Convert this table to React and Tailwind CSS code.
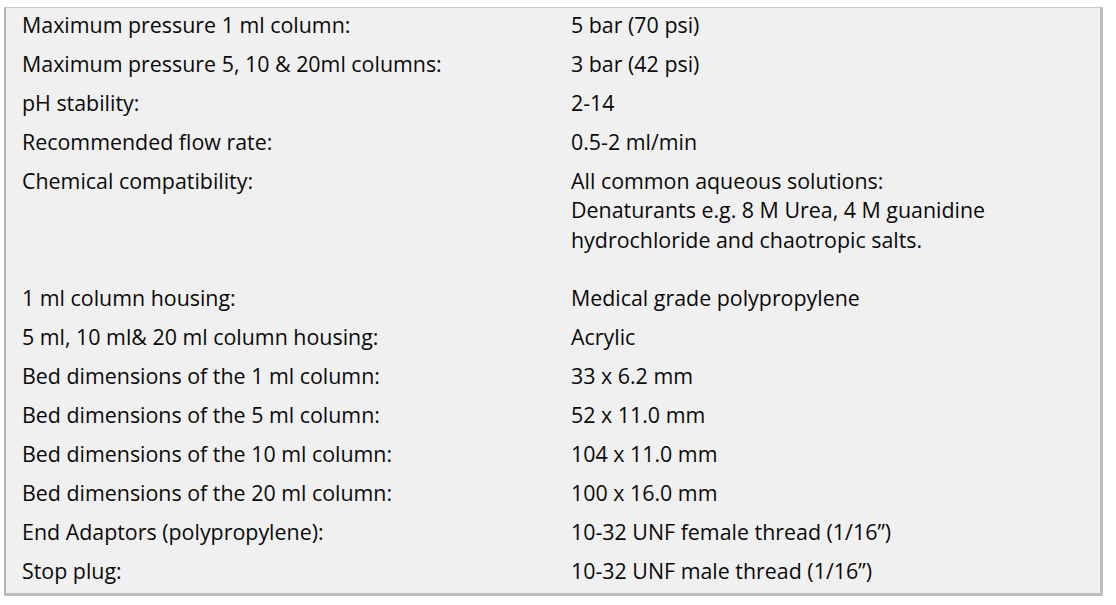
import React from "react";

const rows = [
  ["Maximum pressure 1 ml column:", ["5 bar (70 psi)"]],
  ["Maximum pressure 5, 10 & 20ml columns:", ["3 bar (42 psi)"]],
  ["pH stability:", ["2-14"]],
  ["Recommended flow rate:", ["0.5-2 ml/min"]],
  [
    "Chemical compatibility:",
    [
      "All common aqueous solutions:",
      "Denaturants e.g. 8 M Urea, 4 M guanidine",
      "hydrochloride and chaotropic salts.",
    ],
    true,
  ],
  ["1 ml column housing:", ["Medical grade polypropylene"]],
  ["5 ml, 10 ml& 20 ml column housing:", ["Acrylic"]],
  ["Bed dimensions of the 1 ml column:", ["33 x 6.2 mm"]],
  ["Bed dimensions of the 5 ml column:", ["52 x 11.0 mm"]],
  ["Bed dimensions of the 10 ml column:", ["104 x 11.0 mm"]],
  ["Bed dimensions of the 20 ml column:", ["100 x 16.0 mm"]],
  ["End Adaptors (polypropylene):", ["10-32 UNF female thread (1/16\u201d)"]],
  ["Stop plug:", ["10-32 UNF male thread (1/16\u201d)"]],
];

const App = () => {
  return (
    <div className="w-[1116px] h-[605px] bg-white pt-[7px] pl-[4px]">
      <div
        className="w-[1099px] h-[589px] bg-[#f0f0f0] border-t border-t-[#c8c8c8] border-l-2 border-l-[#b4b4b4] border-r-[3px] border-r-[#bdbdbd] border-b-[3px] border-b-[#bdbdbd] pl-[16px] text-[#0a0a0a] text-[21.4px]"
        style={{ fontFamily: '"Open Sans", "Liberation Sans", sans-serif' }}
      >
        <div className="-mt-[3px]">
          {rows.map(([label, value, gap]) => (
            <div
              key={label}
              className={`flex py-[4.75px] leading-[29.5px] ${gap ? "mb-[19px]" : ""}`}
            >
              <div className="w-[549px] shrink-0">{label}</div>
              <div>
                {value.map((line) => (
                  <div key={line}>{line}</div>
                ))}
              </div>
            </div>
          ))}
        </div>
      </div>
    </div>
  );
};

export default App;
